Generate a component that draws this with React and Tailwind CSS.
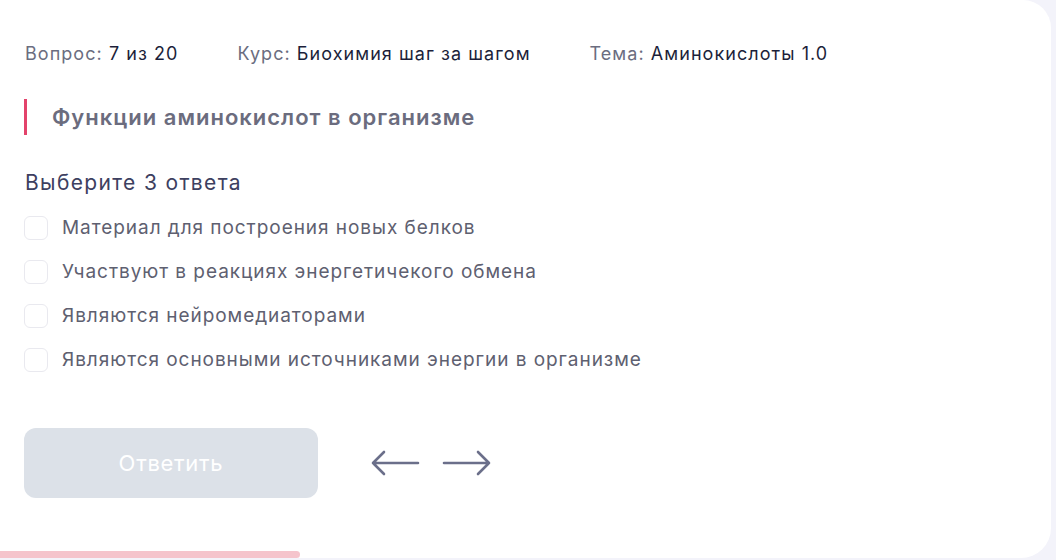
import React from "react";

const options = [
  "Материал для построения новых белков",
  "Участвуют в реакциях энергетичекого обмена",
  "Являются нейромедиаторами",
  "Являются основными источниками энергии в организме",
];

export default function App() {
  return (
    <div className="w-[1056px] h-[560px] bg-[#f3f3fa] overflow-hidden" style={{ fontFamily: "Inter, 'Noto Sans', sans-serif" }}>
      <div className="relative w-[1051px] h-[558px] bg-white rounded-tr-[28px] rounded-br-[30px] overflow-hidden">
        <div className="flex flex-col pl-[24px] pt-[41px]">
          <div className="flex items-center gap-[59px] text-[18px] leading-[26px] h-[26px] pl-[1px] tracking-[1.05px]">
            <div><span className="text-[#6b6d80]">Вопрос:</span> <span className="text-[#1c1f3a]">7 из 20</span></div>
            <div><span className="text-[#6b6d80]">Курс:</span> <span className="text-[#1c1f3a]">Биохимия шаг за шагом</span></div>
            <div><span className="text-[#6b6d80]">Тема:</span> <span className="text-[#1c1f3a]">Аминокислоты 1.0</span></div>
          </div>
          <div className="mt-[32px] flex items-center h-[36px] border-l-[3px] border-[#e3436b] pl-[25px]">
            <span className="text-[22px] font-semibold text-[#6b6c7e] tracking-[1px]">Функции аминокислот в организме</span>
          </div>
          <div className="mt-[34px] text-[21px] leading-[28px] text-[#3d4060] pl-[1px] tracking-[1.35px]">Выберите 3 ответа</div>
          <div className="mt-[9px] flex flex-col">
            {options.map((o) => (
              <label key={o} className="flex items-center h-[44px] gap-[14px]">
                <span className="w-[24px] h-[24px] rounded-[6px] border-[1.5px] border-[#e9e9ef] bg-white shrink-0" />
                <span className="text-[19px] text-[#5e6070] tracking-[0.95px]">{o}</span>
              </label>
            ))}
          </div>
          <div className="mt-[46px] flex items-center gap-[52px]">
            <button className="w-[294px] h-[70px] rounded-[12px] bg-[#dce1e8] text-white text-[22px] tracking-[0.7px]">Ответить</button>
            <div className="flex items-center gap-[18px]">
              <svg width="52" height="28" viewBox="0 0 52 28" fill="none" stroke="#6b6f8a" strokeWidth="2.6" strokeLinecap="round" strokeLinejoin="round">
                <path d="M48 14H3M14 3L3 14L14 25" />
              </svg>
              <svg width="52" height="28" viewBox="0 0 52 28" fill="none" stroke="#6b6f8a" strokeWidth="2.6" strokeLinecap="round" strokeLinejoin="round">
                <path d="M4 14H49M38 3L49 14L38 25" />
              </svg>
            </div>
          </div>
        </div>
        <div className="absolute left-0 bottom-0 w-[300px] h-[7px] bg-[#f5c4cc] rounded-r-full" />
      </div>
    </div>
  );
}
